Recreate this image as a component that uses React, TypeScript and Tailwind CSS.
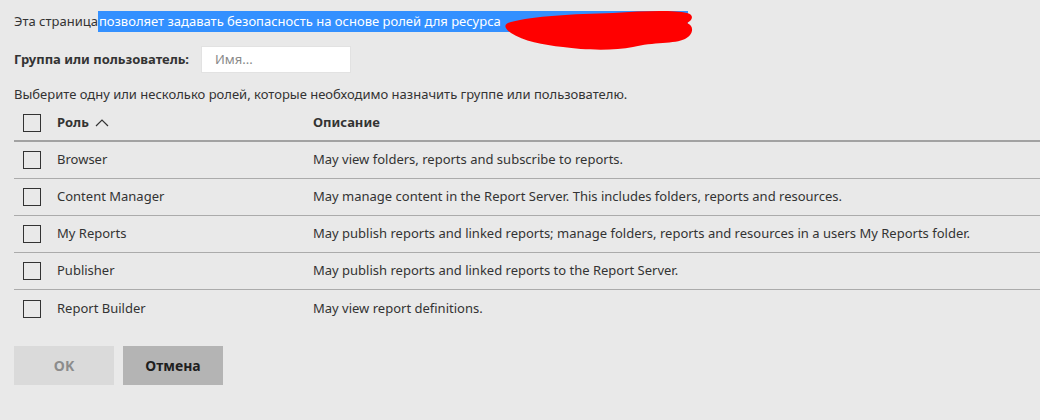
import React from 'react';

const roles = [
  { name: 'Browser', desc: 'May view folders, reports and subscribe to reports.' },
  { name: 'Content Manager', desc: 'May manage content in the Report Server. This includes folders, reports and resources.' },
  { name: 'My Reports', desc: 'May publish reports and linked reports; manage folders, reports and resources in a users My Reports folder.' },
  { name: 'Publisher', desc: 'May publish reports and linked reports to the Report Server.' },
  { name: 'Report Builder', desc: 'May view report definitions.' },
];

function Box() {
  return <span className="block w-[18px] h-[18px] border border-[#333] shrink-0" />;
}

function Scribble() {
  return (
    <svg className="absolute left-[503px] top-[9px]" width="197" height="42" viewBox="0 0 197 42">
      <path
        d="M8 13 C30 7 70 5 110 4 C140 2 170 1 184 4 C192 6 189 12 184 14 C192 17 190 26 182 30 C172 35 150 33 130 38 C110 42 80 41 60 38 C40 36 20 32 8 24 C1 19 0 15 8 13 Z"
        fill="#ff0000"
      />
    </svg>
  );
}

export default function App() {
  return (
    <div className="w-[1040px] h-[420px] bg-[#e9e9e9] text-[#333] text-[13px] font-['Noto_Sans',sans-serif] overflow-hidden">
      <div className="relative pl-[14px] pt-[11px] h-[41px] leading-[21px]">
        <span>Эта страница</span>
        <span className="inline-block w-[590px] bg-[#3390ff] text-white pl-[1px]">
          позволяет задавать безопасность на основе ролей для ресурса
        </span>
        <Scribble />
      </div>

      <div className="flex items-center pl-[14px] h-[37px]">
        <span className="font-bold w-[187px]">Группа или пользователь:</span>
        <div className="w-[150px] h-[27px] bg-white border border-[#e2e2e2] flex items-center pl-[13px] text-[#8a8a8a]">
          Имя...
        </div>
      </div>

      <div className="pl-[14px] pt-[7px] leading-[18px]">
        Выберите одну или несколько ролей, которые необходимо назначить группе или пользователю.
      </div>

      <div className="ml-[14px] mt-[2px]">
        <div className="flex items-center h-[37px] border-b-2 border-[#a2a2a2]">
          <div className="w-[43px] pl-[9px]"><Box /></div>
          <div className="w-[256px] font-bold flex items-center gap-[6px]">
            Роль
            <svg width="14" height="9" viewBox="0 0 14 9" fill="none" stroke="#333" strokeWidth="1.2">
              <path d="M1 8 L7 2 L13 8" />
            </svg>
          </div>
          <div className="font-bold">Описание</div>
        </div>
        {roles.map((r, i) => (
          <div
            key={r.name}
            className={`flex items-center h-[37px] ${i < roles.length - 1 ? 'border-b border-[#ababab]' : ''}`}
          >
            <div className="w-[43px] pl-[9px]"><Box /></div>
            <div className="w-[256px]">{r.name}</div>
            <div>{r.desc}</div>
          </div>
        ))}
      </div>

      <div className="flex gap-[9px] pl-[14px] mt-[19px]">
        <button className="w-[100px] h-[39px] bg-[#dadada] text-[#8c8c8c] font-bold text-[14px]">OK</button>
        <button className="w-[100px] h-[39px] bg-[#b4b4b4] text-[#1f1f1f] font-bold text-[14px]">Отмена</button>
      </div>
    </div>
  );
}
